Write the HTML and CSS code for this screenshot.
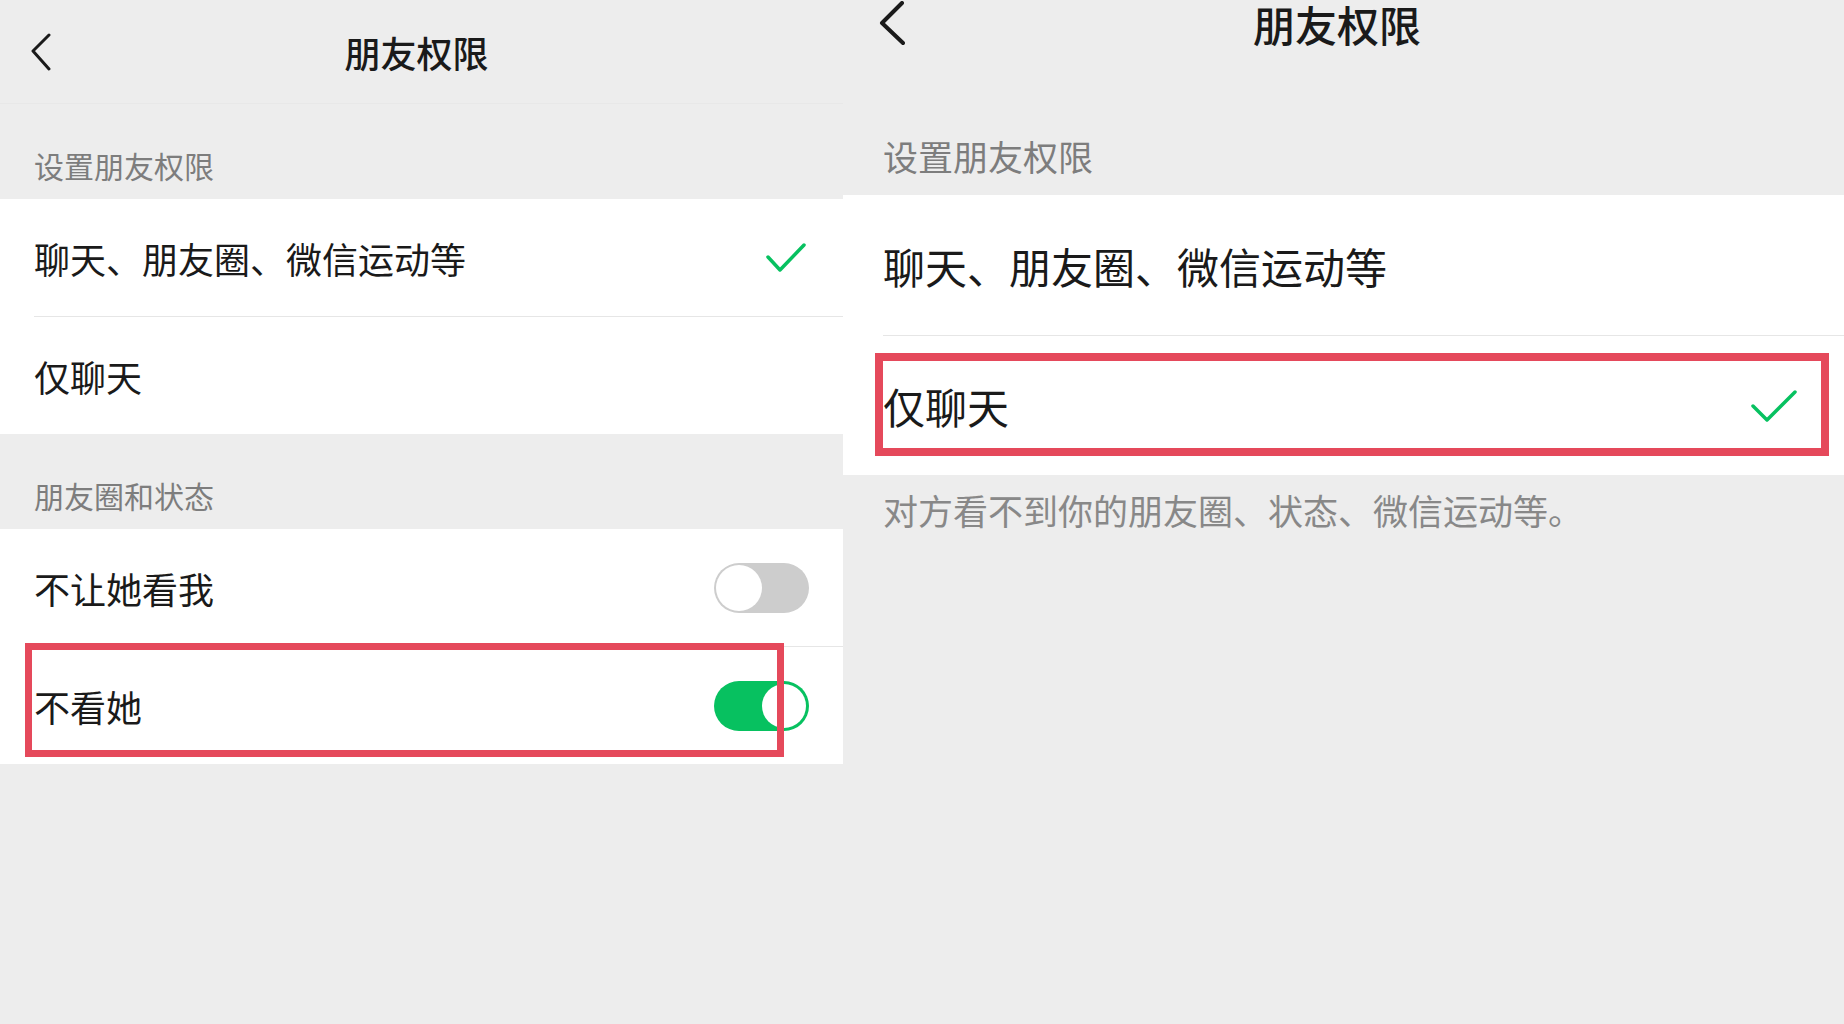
FILE: index.html
```html
<!DOCTYPE html>
<html lang="zh-CN">
<head>
  <meta charset="UTF-8">
  <meta name="viewport" content="width=device-width, initial-scale=1.0">
  <title>朋友权限</title>
  <link rel="stylesheet" href="styles.css">
</head>
<body>

<div class="screens">
  <!-- Left screen: moments switches -->
  <section class="phone phone-left">
    <header class="nav">
      <svg class="back" width="20" height="38" viewBox="0 0 20 38">
        <polyline points="18,2 2,18 18,36" />
      </svg>
      <h1>朋友权限</h1>
    </header>

    <div class="group-title">设置朋友权限</div>
    <ul class="group">
      <li class="cell">
        <span>聊天、朋友圈、微信运动等</span>
        <svg class="check" width="40" height="31" viewBox="0 0 40 31">
          <polyline points="2,15 14,28 38,3" />
        </svg>
      </li>
      <li class="cell"><span>仅聊天</span></li>
    </ul>

    <div class="group-title">朋友圈和状态</div>
    <ul class="group">
      <li class="cell">
        <span>不让她看我</span>
        <span class="switch"></span>
      </li>
      <li class="cell">
        <span>不看她</span>
        <span class="switch on"></span>
        <div class="mark"></div>
      </li>
    </ul>
  </section>

  <!-- Right screen: chat only -->
  <section class="phone phone-right">
    <header class="nav">
      <svg class="back" width="26" height="46" viewBox="0 0 26 46">
        <polyline points="23,2 3,22 24,42" />
      </svg>
      <h1>朋友权限</h1>
    </header>

    <div class="group-title">设置朋友权限</div>
    <ul class="group">
      <li class="cell"><span>聊天、朋友圈、微信运动等</span></li>
      <li class="cell">
        <span>仅聊天</span>
        <svg class="check" width="46" height="34" viewBox="0 0 46 34">
          <polyline points="2,17 16,31 44,3" />
        </svg>
        <div class="mark"></div>
      </li>
    </ul>
    <p class="tip">对方看不到你的朋友圈、状态、微信运动等。</p>
  </section>
</div>

</body>
</html>
```

FILE: styles.css
```css
/* Basic Styles */
body {
  margin: 0;
  padding: 0;
  background-color: #ededed;
  color: #1a1a1a;
  font-family: "Noto Sans CJK SC", "Noto Sans", sans-serif;
}
ul {
  list-style: none;
  margin: 0;
  padding: 0;
}
.screens {
  display: flex;
  height: 1024px;
  overflow: hidden;
}
.phone {
  background-color: #ededed;
}
.phone-left {
  width: 843px;
  flex-shrink: 0;
}
.phone-right {
  flex: 1;
}

/* Nav bar */
.nav {
  display: grid;
  grid-template-columns: 1fr auto 1fr;
  align-items: center;
}
.nav h1 {
  margin: 0;
  font-weight: 500;
  color: #1a1a1a;
}
.back polyline {
  fill: none;
  stroke: #1a1a1a;
  stroke-linecap: round;
  stroke-linejoin: round;
}
.phone-left .nav {
  height: 103px;
  border-bottom: 1px solid #e8e8e8;
  padding-left: 31px;
  padding-right: 41px;
}
.phone-left .nav h1 {
  font-size: 36px;
  line-height: 44px;
}
.phone-left .back polyline {
  stroke-width: 3;
}
.phone-right .nav {
  box-sizing: border-box;
  height: 82px;
  align-items: start;
  padding: 2px 49px 0 36px;
}
.phone-right .nav h1 {
  font-size: 42px;
  line-height: 44px;
}
.phone-right .back {
  margin-top: -1px;
}
.phone-right .back polyline {
  stroke-width: 4;
}

/* Groups and cells */
.group-title {
  color: #7d7d7d;
}
.phone-left .group-title {
  font-size: 30px;
  line-height: 36px;
  padding: 43px 0 16px 34px;
}
.phone-right .group-title {
  font-size: 35px;
  line-height: 42px;
  padding: 53px 0 18px 40px;
}
.group {
  background-color: #fff;
}
.cell {
  position: relative;
  display: flex;
  align-items: center;
  justify-content: space-between;
}
.cell + .cell {
  border-top: 1px solid #e6e6e6;
}
.phone-left .cell {
  height: 117px;
  margin-left: 34px;
  padding-right: 34px;
  font-size: 36px;
}
.phone-left .cell .check {
  margin-right: 3px;
}
.phone-right .cell {
  height: 140px;
  margin-left: 40px;
  padding-right: 47px;
  font-size: 42px;
}
.phone-right .cell + .cell {
  height: 139px;
}
.check polyline {
  fill: none;
  stroke: #07c160;
  stroke-width: 3.5;
  stroke-linecap: round;
  stroke-linejoin: round;
}

/* Switches */
.switch {
  box-sizing: border-box;
  display: flex;
  width: 95px;
  height: 50px;
  padding: 2px;
  border-radius: 25px;
  background-color: #cdcdcd;
}
.switch::after {
  content: "";
  width: 46px;
  height: 46px;
  border-radius: 50%;
  background-color: #fff;
}
.switch.on {
  background-color: #07c160;
  justify-content: flex-end;
  padding: 3px;
}
.switch.on::after {
  width: 44px;
  height: 44px;
}

/* Red annotation boxes */
.mark {
  position: absolute;
  box-sizing: border-box;
  border: 7px solid #e5495b;
}
.phone-left .mark {
  left: -9px;
  top: -4px;
  width: 759px;
  height: 114px;
}
.phone-right .mark {
  left: -8px;
  top: 17px;
  width: 954px;
  height: 103px;
  border-width: 8px;
}

/* Tip text */
.tip {
  margin: 0;
  padding: 14px 0 0 40px;
  font-size: 35px;
  line-height: 42px;
  color: #888;
}
```
